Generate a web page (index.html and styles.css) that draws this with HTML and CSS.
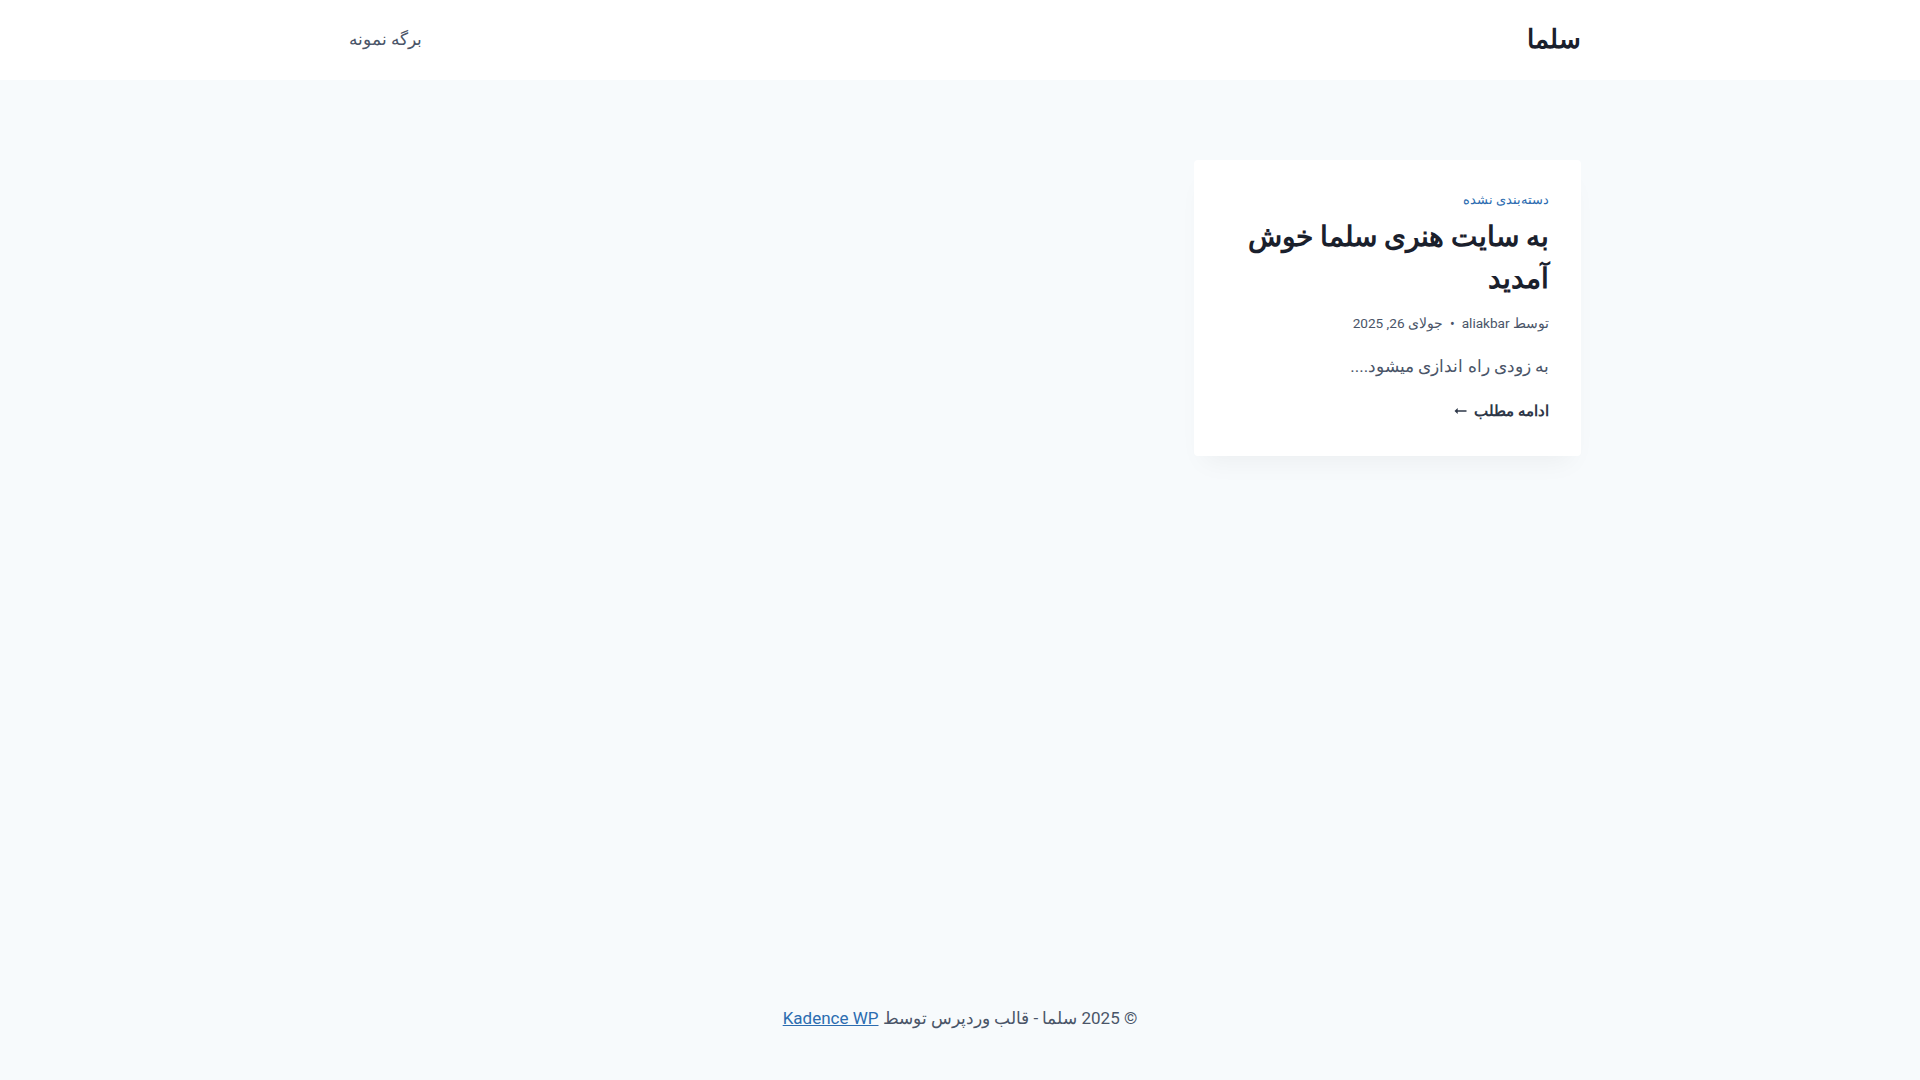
FILE: index.html
```html
<!DOCTYPE html>
<html lang="fa" dir="rtl">
<head>
<meta charset="utf-8">
<title>سلما</title>
<link rel="stylesheet" href="styles.css">
</head>
<body>
<div class="wrapper">
  <header class="site-header">
    <div class="container header-inner">
      <a class="site-title" href="#">سلما</a>
      <nav class="primary-nav">
        <a href="#">برگه نمونه</a>
      </nav>
    </div>
  </header>
  <main class="site-content">
    <div class="container">
      <div class="post-grid">
        <article class="loop-entry">
          <div class="entry-taxonomies"><a href="#">دسته‌بندی نشده</a></div>
          <h2 class="entry-title"><a href="#">به سایت هنری سلما خوش آمدید</a></h2>
          <div class="entry-meta">
            <span class="author">توسط <a href="#">aliakbar</a></span>
            <span class="sep">•</span>
            <span class="date">جولای 26, 2025</span>
          </div>
          <p class="entry-summary">به زودی راه اندازی میشود....</p>
          <a class="more-link" href="#">ادامه مطلب
            <svg class="arrow" viewBox="0 0 16 10" width="13" height="8" aria-hidden="true"><path d="M0.5 5 L4.5 1.3 L4.5 4.1 L15.5 4.1 L15.5 5.9 L4.5 5.9 L4.5 8.7 Z" fill="currentColor"/></svg>
          </a>
        </article>
        <div></div>
        <div></div>
      </div>
    </div>
  </main>
  <footer class="site-footer">
    <p>© 2025 سلما - قالب وردپرس توسط <a href="#">Kadence WP</a></p>
  </footer>
</div>
</body>
</html>
```
FILE: styles.css
```css
* { box-sizing: border-box; }
html, body { margin: 0; padding: 0; }
body {
  font-family: -apple-system, BlinkMacSystemFont, "Segoe UI", Roboto, "Noto Sans", sans-serif;
  font-size: 17px;
  line-height: 1.6;
  color: #4A5568;
  background: #F7FAFC;
}
a { color: inherit; text-decoration: none; }
.wrapper { min-height: 100vh; display: flex; flex-direction: column; }
.container { max-width: 1290px; margin: 0 auto; padding: 0 24px; width: 100%; }
.site-header { background: #fff; height: 80px; }
.header-inner { height: 80px; display: flex; align-items: center; justify-content: space-between; }
.site-title { font-size: 26px; font-weight: 700; line-height: 1.2; color: #1A202C; }
.primary-nav a { display: block; padding: 0 10px; font-size: 17px; color: #4A5568; }
.site-content { flex: 1; padding-top: 80px; padding-bottom: 80px; }
.post-grid { display: grid; grid-template-columns: repeat(3, 1fr); gap: 40px; }
.loop-entry {
  background: #fff;
  border-radius: 4px;
  box-shadow: 0 15px 25px -10px rgba(0,0,0,0.05);
  padding: 30px 32px 32px;
}
.entry-taxonomies { font-size: 13px; letter-spacing: 0.02em; line-height: 1.55; margin-bottom: 6px; }
.entry-taxonomies a { color: #2B6CB0; }
.entry-title { margin: 0; font-size: 28px; line-height: 1.5; font-weight: 700; color: #1A202C; }
.entry-meta { font-size: 13.6px; line-height: 1.6; margin: 13px 0 0; color: #4A5568; display: flex; gap: 7px; align-items: center; }
.entry-meta .sep { font-size: 14px; }
.entry-summary { margin: 17px 0 0; font-size: 17px; line-height: 1.6; color: #4A5568; }
.more-link { margin-top: 19px; display: inline-flex; align-items: center; gap: 7px; font-size: 15px; line-height: 1.65; font-weight: 600; color: #2D3748; }
.arrow { display: block; }
.site-footer { background: #F7FAFC; padding: 30px 0 48px; text-align: center; }
.site-footer p { margin: 0; font-size: 17px; color: #4A5568; }
.site-footer a { color: #2B6CB0; text-decoration: underline; }
```
